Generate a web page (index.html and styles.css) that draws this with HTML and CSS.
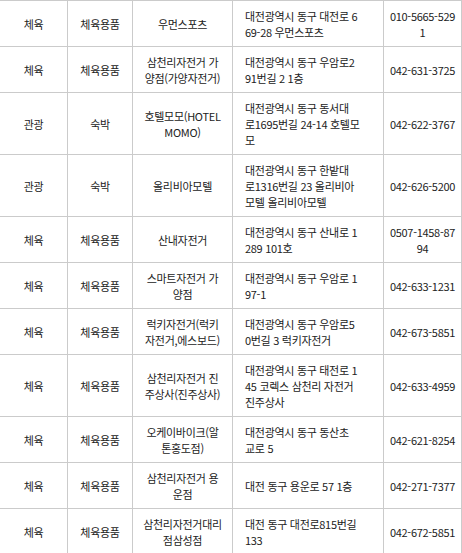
FILE: index.html
```html
<!DOCTYPE html>
<html lang="ko">
<head>
<meta charset="utf-8">
<title>동구 업소 목록</title>
<link rel="stylesheet" href="styles.css">
</head>
<body>
<table class="list">
  <colgroup>
    <col class="c-cat">
    <col class="c-sub">
    <col class="c-name">
    <col class="c-addr">
    <col class="c-tel">
  </colgroup>
  <tbody>
    <tr><td>체육</td><td>체육용품</td><td>우먼스포츠</td><td class="addr">대전광역시 동구 대전로 6<br>69-28 우먼스포츠</td><td>010-5665-529<br>1</td></tr>
    <tr><td>체육</td><td>체육용품</td><td>삼천리자전거 가<br>양점(가양자전거)</td><td class="addr">대전광역시 동구 우암로2<br>91번길 2 1층</td><td>042-631-3725</td></tr>
    <tr><td>관광</td><td>숙박</td><td>호텔모모(HOTEL<br>MOMO)</td><td class="addr">대전광역시 동구 동서대<br>로1695번길 24-14 호텔모<br>모</td><td>042-622-3767</td></tr>
    <tr><td>관광</td><td>숙박</td><td>올리비아모텔</td><td class="addr">대전광역시 동구 한밭대<br>로1316번길 23 올리비아<br>모텔 올리비아모텔</td><td>042-626-5200</td></tr>
    <tr><td>체육</td><td>체육용품</td><td>산내자전거</td><td class="addr">대전광역시 동구 산내로 1<br>289 101호</td><td>0507-1458-87<br>94</td></tr>
    <tr><td>체육</td><td>체육용품</td><td>스마트자전거 가<br>양점</td><td class="addr">대전광역시 동구 우암로 1<br>97-1</td><td>042-633-1231</td></tr>
    <tr><td>체육</td><td>체육용품</td><td>럭키자전거(럭키<br>자전거,에스보드)</td><td class="addr">대전광역시 동구 우암로5<br>0번길 3 럭키자전거</td><td>042-673-5851</td></tr>
    <tr><td>체육</td><td>체육용품</td><td>삼천리자전거 진<br>주상사(진주상사)</td><td class="addr">대전광역시 동구 태전로 1<br>45 코렉스 삼천리 자전거<br>진주상사</td><td>042-633-4959</td></tr>
    <tr><td>체육</td><td>체육용품</td><td>오케이바이크(알<br>톤홍도점)</td><td class="addr">대전광역시 동구 동산초<br>교로 5</td><td>042-621-8254</td></tr>
    <tr><td>체육</td><td>체육용품</td><td>삼천리자전거 용<br>운점</td><td class="addr">대전 동구 용운로 57 1층</td><td>042-271-7377</td></tr>
    <tr><td>체육</td><td>체육용품</td><td>삼천리자전거대리<br>점삼성점</td><td class="addr">대전 동구 대전로815번길<br>133</td><td>042-672-5851</td></tr>
  </tbody>
</table>
</body>
</html>
```

FILE: styles.css
```css
html, body {
  margin: 0;
  padding: 0;
  background: #fff;
}

body {
  overflow: hidden;
}

.list {
  border-collapse: collapse;
  table-layout: fixed;
  width: 463px;
  margin-left: -1px;
  font-family: "Noto Sans CJK KR", "Noto Sans", sans-serif;
  font-size: 11px;
  line-height: 16px;
  letter-spacing: -0.3px;
  color: #222;
}

.c-cat { width: 68px; }
.c-sub { width: 65px; }
.c-name { width: 100px; }
.c-addr { width: 151px; }
.c-tel { width: 78px; }

.list td {
  border: 1px solid #cbcbcb;
  padding: 7px 2px 6px;
  text-align: center;
  vertical-align: middle;
  white-space: nowrap;
  overflow: hidden;
}

.list td.addr {
  text-align: left;
  padding-left: 12px;
}
```
